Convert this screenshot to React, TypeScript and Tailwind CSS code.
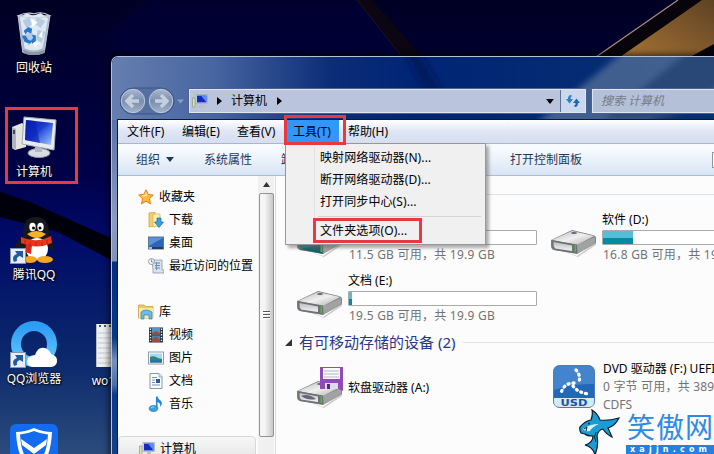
import type { ReactNode } from "react";
import clsx from "clsx";

function Wallpaper() {
  return (
    <svg className="absolute inset-0 h-[454px] w-[714px]" viewBox="0 0 714 454">
      <defs>
        <linearGradient id="sky" x1="0" y1="0" x2="0" y2="1">
          <stop offset="0" stopColor="#000024" />
          <stop offset="0.38" stopColor="#000048" />
          <stop offset="0.52" stopColor="#000a68" />
          <stop offset="0.8" stopColor="#0c2a6c" />
          <stop offset="1" stopColor="#2b4c7c" />
        </linearGradient>
        <linearGradient id="gold" x1="1" y1="0" x2="0" y2="1">
          <stop offset="0" stopColor="#5d4224" />
          <stop offset="1" stopColor="#a87434" />
        </linearGradient>
        <filter id="soft"><feGaussianBlur stdDeviation="3" /></filter>
      </defs>
      <rect width="714" height="454" fill="url(#sky)" />
      <path d="M150 0H370L420 56H112V30Z" fill="#00003c" opacity="0.5" filter="url(#soft)" />
      <path d="M0 192L30 202L111 238V260L58 232L0 217Z" fill="#00000c" />
      <path d="M356 0H372L422 57H402Z" fill="#0b0612" />
      <path d="M357 0L402 57" stroke="#1e1226" strokeWidth="1" />
      <path d="M678 0H714V57H596Z" fill="#07040c" />
      <path d="M702 0H714V44L690 57H620Z" fill="url(#gold)" />
      <path d="M678 0L596 57" stroke="#ad8d80" strokeWidth="1.2" />
    </svg>
  );
}

function RecycleBin() {
  return (
    <svg width="38" height="45" viewBox="0 0 40 48">
      <path d="M3 5L8 44Q20 49 31 44L37 5Z" fill="#a5b6ca" stroke="#c9d3df" />
      <path d="M5 7L10 40Q20 44 29 40L35 8L27 2L19 5L12 2Z" fill="#dfe9f3" />
      <path d="M8 10L15 7L18 14L12 19ZM23 6L32 11L27 18L20 13ZM10 26L17 21L21 29L14 37ZM24 20L32 22L28 34L22 30Z" fill="#b5cbe2" />
      <path d="M17 8L24 12L18 17ZM25 27L29 20L29 29ZM18 33L26 34L21 39Z" fill="#fff" />
      <path d="M9 21L14 17L18 19L17 24L13 22L11 25ZM7 26L11 26L14 31L18 32L16 35L10 33ZM18 25L22 26L22 32L18 35L17 31L19 29Z" fill="#2777cd" />
      <path d="M3 5Q12 1 20 3Q29 0 37 5Q20 10 3 5Z" fill="none" stroke="#c6cfdb" strokeWidth="1.2" />
      <path d="M8 41Q20 47 32 41L31 45Q20 49 9 45Z" fill="#8b979d" />
    </svg>
  );
}

function DesktopComputer() {
  return (
    <svg width="46" height="42" viewBox="0 0 46 42">
      <defs>
        <linearGradient id="screen" x1="0" y1="0" x2="1" y2="1">
          <stop offset="0" stopColor="#061a9c" />
          <stop offset="0.48" stopColor="#1c3fd6" />
          <stop offset="0.52" stopColor="#2d55d8" />
          <stop offset="1" stopColor="#a8cbff" />
        </linearGradient>
      </defs>
      <path d="M1 11L11 7L15 10V31L4 34L1 32Z" fill="#e3e4e2" />
      <path d="M1 11L5 13V33L1 32Z" fill="#aeb3b5" />
      <rect x="2" y="14" width="2" height="4" fill="#3d4a50" />
      <ellipse cx="28" cy="37" rx="11" ry="4.5" fill="#d9dde1" stroke="#9099a4" />
      <path d="M24 29L31 30V36H24Z" fill="#b0b9c4" />
      <path d="M13 1L45 4L43 34L11 28Z" fill="#e8ebee" stroke="#a4abb5" />
      <path d="M15 4L42 7L40 29L14 24Z" fill="url(#screen)" />
      <path d="M24 5L15 4L14 24L29 27Z" fill="#0a1fb0" opacity="0.6" />
    </svg>
  );
}

function ShortcutArrow() {
  return (
    <svg className="absolute bottom-0 left-0" width="16" height="16" viewBox="0 0 16 16">
      <rect x="0.5" y="0.5" width="15" height="15" fill="#e8eef6" stroke="#8295ad" />
      <path d="M4 14Q1 8 7 6L5 3L13 3L13 10L10 8Q6 9 7 13Z" fill="#235a9f" />
    </svg>
  );
}

function Penguin() {
  return (
    <svg width="42" height="48" viewBox="0 0 42 48">
      <path d="M10 20Q9 1 23 1Q37 1 36 20Q43 29 40 35L35 32Q33 43 23 43Q12 43 9 32L3 35Q0 27 10 20Z" fill="#16181c" />
      <ellipse cx="24" cy="33" rx="11" ry="11" fill="#fff" />
      <ellipse cx="17" cy="43.500" rx="7" ry="3.500" fill="#f5a623" />
      <ellipse cx="32" cy="43.500" rx="8" ry="3.500" fill="#f5a623" />
      <ellipse cx="19.500" cy="11" rx="3.200" ry="4.200" fill="#fff" />
      <ellipse cx="27.500" cy="11" rx="3.200" ry="4.200" fill="#fff" />
      <circle cx="20.500" cy="12" r="1.500" />
      <circle cx="27" cy="12" r="1.500" />
      <path d="M14 18Q23 12 33 18Q24 26 14 18Z" fill="#f7b124" />
      <path d="M8 21Q23 28 38 20L39 27Q24 34 8 27Z" fill="#e8371c" />
      <path d="M13 28L19 29L18 38L12 36Z" fill="#d82818" />
      <path d="M12 24V28M17 26V30M23 26V30M29 26V30M34 24V28" stroke="#b92213" />
    </svg>
  );
}

function QQBrowser() {
  return (
    <svg width="48" height="48" viewBox="0 0 48 48">
      <defs>
        <linearGradient id="ring" x1="0" y1="0" x2="0" y2="1">
          <stop offset="0" stopColor="#2d9cf4" />
          <stop offset="1" stopColor="#64c9ff" />
        </linearGradient>
      </defs>
      <circle cx="24" cy="24" r="18" fill="none" stroke="url(#ring)" strokeWidth="10" />
      <path d="M22 47Q15 45 18 38Q21 35 25 35Q28 26 35 28Q40 30 41 34Q48 36 47 42Q46 47 40 47Z" fill="#fff" />
    </svg>
  );
}

function Notepad() {
  return (
    <svg width="40" height="44" viewBox="0 0 40 44">
      <rect width="40" height="43" fill="#eef0f1" />
      <path d="M0 0V43" stroke="#b9bdc3" strokeWidth="2" />
      <path d="M2 9H40M2 14H40M2 19H40M2 24H40M2 29H40M2 34H40M2 39H40" stroke="#c3cad2" />
      <path d="M3 2H5M8 2H10M13 2H15" stroke="#555" strokeWidth="2" />
    </svg>
  );
}

function Shield() {
  return (
    <svg width="48" height="48" viewBox="0 0 48 48">
      <rect width="48" height="48" rx="6" fill="#136cf0" />
      <path d="M24 4Q33 8 42 8Q41 28 35 36Q30 42 24 45Q18 42 13 36Q7 28 6 8Q15 8 24 4Z" fill="#fff" />
      <path d="M24 7Q31 10 38 10.500Q37 26 33 32Q29 38 24 41Q19 38 15 32Q11 26 10 10.500Q17 10 24 7Z" fill="#136cf0" />
      <path d="M11 15L24 24L37 15L36 21L24 30L12 21Z" fill="#fff" />
    </svg>
  );
}

function DesktopIcon({ place, label, shortcut, children }: {
  place: string;
  label: string;
  shortcut?: boolean;
  children: ReactNode;
}) {
  return (
    <div className={clsx("absolute flex w-[68px] flex-col items-center", place)}>
      <div className="relative flex h-12 w-12 items-center justify-center">
        {children}
        {shortcut && <ShortcutArrow />}
      </div>
      <span className="pt-0.5 text-xs leading-[18px] whitespace-nowrap text-white [text-shadow:1px_1px_2px_#000,0_0_2px_#000]">
        {label}
      </span>
    </div>
  );
}

function ComputerIcon() {
  return (
    <svg className="shrink-0" width="16" height="16" viewBox="0 0 16 16">
      <path d="M0.500 5H3V14H0.500Z" fill="#dce6b4" stroke="#8a967a" strokeWidth="0.7" />
      <rect x="4" y="1.500" width="11.500" height="9" fill="#dfe6f2" stroke="#99a5b8" strokeWidth="0.7" />
      <rect x="5" y="2.500" width="9.500" height="7" fill="#142bc0" />
      <path d="M9 2.500H14.500V9.500Z" fill="#5f8cf5" />
      <path d="M8 11H12V13H14V15H6V13H8Z" fill="#b8c0ca" />
    </svg>
  );
}

function StarIcon() {
  return (
    <svg width="16" height="16" viewBox="0 0 16 16">
      <path d="M8 0.800L10.200 5.400L15.300 6.100L11.500 9.600L12.500 14.800L8 12.200L3.500 14.800L4.500 9.600L0.700 6.100L5.800 5.400Z" fill="#ffb93e" stroke="#e97b16" />
      <path d="M8 3L9.300 6.500L5 8L4 6.500L6.500 6Z" fill="#fff0a8" />
    </svg>
  );
}

function DownloadFolderIcon() {
  return (
    <svg width="16" height="16" viewBox="0 0 16 16">
      <path d="M1 1L7 0V14L1 15Z" fill="#f3cf6c" stroke="#c59a35" strokeWidth="0.7" />
      <path d="M5 2H12V14L5 15Z" fill="#fff0a9" stroke="#ceb058" strokeWidth="0.7" />
      <path d="M9 6H13V10H15.500L11 15.500L6.500 10H9Z" fill="#3a9ee9" stroke="#1867ad" strokeWidth="0.7" />
    </svg>
  );
}

function DesktopFolderIcon() {
  return (
    <svg width="16" height="16" viewBox="0 0 16 16">
      <rect x="0.500" y="2" width="15" height="12" fill="#2c66b4" stroke="#64748b" />
      <path d="M1 11Q9 6 15 3V2.500H1Z" fill="#5794dc" />
      <path d="M1 12H15V14H1Z" fill="#203d70" />
      <path d="M1 12H4V14H1Z" fill="#8bc7ee" />
    </svg>
  );
}

function RecentIcon() {
  return (
    <svg width="16" height="16" viewBox="0 0 16 16">
      <path d="M4 2H14V12H16V15H5V12Z" fill="#dbe2eb" stroke="#8b9aaa" strokeWidth="0.8" />
      <path d="M7 5H12M7 7.500H12M7 10H12" stroke="#6485ad" />
      <path d="M8 4H9V12H8Z" fill="#7091bd" />
      <circle cx="3.500" cy="3.500" r="3" fill="#f7f8fa" stroke="#90999f" />
      <path d="M3.500 1.500V4H5.500" stroke="#556575" strokeWidth="0.7" fill="none" />
    </svg>
  );
}

function LibraryIcon() {
  return (
    <svg width="16" height="16" viewBox="0 0 16 16">
      <path d="M0.500 1H6L7.500 2.500H15V14H0.500Z" fill="#edca68" stroke="#c49b3c" strokeWidth="0.7" />
      <path d="M1 4H15V14H1Z" fill="#ffe9a0" />
      <path d="M3 8Q8 4 14 8V15H11V11H6V15H3Z" fill="#68bde9" stroke="#2881b6" strokeWidth="0.7" />
    </svg>
  );
}

function VideoIcon() {
  return (
    <svg width="16" height="16" viewBox="0 0 16 16">
      <rect x="1" y="0.500" width="14" height="15" fill="#23323e" />
      <rect x="4" y="1" width="8" height="6.500" fill="#5795c4" />
      <rect x="4" y="8.500" width="8" height="6.500" fill="#4686ba" />
      <path d="M4 6L8 4L12 6V7.500H4ZM4 12L8 9.500L12 13V15H4Z" fill="#994d3a" />
      <path d="M2.500 1.500V15M13.500 1.500V15" stroke="#edf2f4" strokeWidth="1.4" strokeDasharray="1.4 1.4" />
    </svg>
  );
}

function PictureIcon() {
  return (
    <svg width="16" height="16" viewBox="0 0 16 16">
      <rect x="0.500" y="2" width="15" height="12" fill="#fff" stroke="#909ca6" />
      <rect x="2" y="3.500" width="12" height="9" fill="#a7d8f6" />
      <path d="M2 7Q6 5 10 8L14 9V12.500H2Z" fill="#35847a" />
      <path d="M2 10H14V12.500H2Z" fill="#2375a5" />
    </svg>
  );
}

function DocumentIcon() {
  return (
    <svg width="16" height="16" viewBox="0 0 16 16">
      <path d="M2 0.500H11L14 3.500V15.500H2Z" fill="#f8fbff" stroke="#8798ab" />
      <path d="M11 0.500V4H14" fill="#dbe5f1" stroke="#8798ab" strokeWidth="0.7" />
      <path d="M4 4.500H9M4 7H7M4 9.500H7M4 12H12" stroke="#7990ae" />
      <rect x="8" y="6" width="4" height="4" fill="#31588e" />
    </svg>
  );
}

function MusicIcon() {
  return (
    <svg width="16" height="16" viewBox="0 0 16 16">
      <path d="M8 0.500H9.500Q10 3 13 5Q15 8 12 11Q13 7 9.500 6V12.500H8Z" fill="#2485d2" />
      <ellipse cx="5.500" cy="12.500" rx="4.300" ry="2.900" fill="#39a2e5" stroke="#1c6faf" strokeWidth="0.7" />
      <path d="M3 12Q4 10.500 6 11" stroke="#a6dcff" fill="none" />
    </svg>
  );
}

const navRows: { icon: ReactNode; label: string; level: number }[] = [
  { icon: <StarIcon />, label: "收藏夹", level: 0 },
  { icon: <DownloadFolderIcon />, label: "下载", level: 1 },
  { icon: <DesktopFolderIcon />, label: "桌面", level: 1 },
  { icon: <RecentIcon />, label: "最近访问的位置", level: 1 },
];

const libraryRows: { icon: ReactNode; label: string; level: number }[] = [
  { icon: <LibraryIcon />, label: "库", level: 0 },
  { icon: <VideoIcon />, label: "视频", level: 1 },
  { icon: <PictureIcon />, label: "图片", level: 1 },
  { icon: <DocumentIcon />, label: "文档", level: 1 },
  { icon: <MusicIcon />, label: "音乐", level: 1 },
];

function NavRow({ icon, label, level }: { icon: ReactNode; label: string; level: number }) {
  return (
    <div className={clsx("flex h-[23px] shrink-0 items-center gap-[5px] whitespace-nowrap", level === 0 ? "pl-5" : "pl-[30px]")}>
      {icon}
      <span>{label}</span>
    </div>
  );
}

function DriveIcon({ kind }: { kind?: "system" | "floppy" }) {
  return (
    <svg className="shrink-0" width="48" height="48" viewBox="0 0 48 48">
      <defs>
        <linearGradient id="metal" x1="0" y1="0" x2="1" y2="1">
          <stop offset="0" stopColor="#b8b8b8" />
          <stop offset="0.5" stopColor="#f0f0f0" />
          <stop offset="1" stopColor="#aaabac" />
        </linearGradient>
        <linearGradient id="face" x1="0" y1="0" x2="0" y2="1">
          <stop offset="0" stopColor="#bcbcc2" />
          <stop offset="1" stopColor="#f3f3f8" />
        </linearGradient>
      </defs>
      <path d="M4 34L27 42L46 28V31L28 43Z" fill="#777" opacity="0.35" />
      <path d="M1 26L22 16L43 21Q47 22 46 26V29L27 40L4 36Q1 35 1 32Z" fill="#858787" />
      <path d="M2 26L22 17L44 22L27 31Z" fill="url(#metal)" />
      <path d="M1.500 26L27 30.500V39.500L4 36Q1.500 34 1.500 31Z" fill="#6f7273" />
      <path d="M3.500 28L22 31.500V37L5 34.500Q3 32 3.500 28Z" fill={kind === "system" ? "#197b7a" : "url(#face)"} />
      {kind === "system" && <path d="M4 35L24 31L27 40Z" fill="#156467" />}
      <path d="M27 31L45 23V29L28 39Z" fill="#a1a3a3" />
      <rect x="24.500" y="31" width="1.5" height="7" fill="#46c039" />
      <ellipse cx="24" cy="19" rx="3" ry="1" fill="#667" />
      {kind === "floppy" && (
        <>
          <path d="M5 31Q12 28 20 34Q12 36 5 31Z" fill="#667" />
          <path d="M24 2H47V26L43 24H24Z" fill="#914bb5" />
          <path d="M27 3H44V14H27Z" fill="#fafafa" />
          <path d="M28 6H43M28 9H43M28 12H43" stroke="#b5b7c2" />
          <path d="M29 18H42V24H29Z" fill="#e1d8e8" />
          <path d="M31 19H34V24H31Z" fill="#502c73" />
        </>
      )}
    </svg>
  );
}

function UsbDisc() {
  return (
    <svg width="42" height="43" viewBox="0 0 42 43">
      <rect x="0.500" y="0.500" width="41" height="42" rx="6" fill="#2367b9" stroke="#477bbb" />
      <path d="M1 6Q1 1 7 1H35Q41 1 41 6V19Q20 18 1 25Z" fill="#4384cc" />
      <path d="M1 33H41V37Q41 42 35 42H7Q1 42 1 37Z" fill="#d9e8f6" />
      <path d="M23 5Q29 12 25 18M21 18Q11 18 8 28M20 21Q25 28 36 29" stroke="#fff" strokeWidth="3.300" strokeLinecap="round" strokeDasharray="1 4" fill="none" />
      <text x="21" y="40.500" textAnchor="middle" textLength="27" lengthAdjust="spacingAndGlyphs" fontSize="8" fontWeight="700" fill="#1d519b" fontFamily="DejaVu Sans, sans-serif">USD</text>
    </svg>
  );
}

function CapacityBar({ fill }: { fill: number }) {
  return (
    <div className="h-[15px] w-[189px] rounded-[1px] border border-[#aaa] bg-white">
      <div className="h-full bg-linear-to-b from-[#55c0d5] from-50% to-[#008ca4] to-50%" style={{ width: `${fill}px` }} />
    </div>
  );
}

function Drive({ name, free, fill, system }: { name?: string; free: string; fill: number; system?: boolean }) {
  return (
    <div className="flex h-[61px] w-[254px] gap-1">
      <div className="pt-[3px]"><DriveIcon kind={system ? "system" : undefined} /></div>
      <div className="flex flex-col whitespace-nowrap">
        <span className="h-[19px] leading-[18px]">{name}</span>
        <CapacityBar fill={fill} />
        <span className="pt-px pl-px leading-[17px] tracking-[0.24px] text-[#737373]">{free}</span>
      </div>
    </div>
  );
}

function Shark() {
  return (
    <svg width="42" height="46" viewBox="0 0 42 46">
      <path d="M13 1Q19 5 21 11Q29 12 40 9Q36 17 29 19L33 28Q27 25 24 20Q19 21 18 27Q20 36 16 46Q14 38 6 36Q14 34 14 27Q8 27 6 25L2 24Q0 20 1 18Q6 12 12 11Q14 6 13 1Z" fill="#1a9dd4" stroke="#101b29" strokeWidth="1.200" />
      <path d="M4 20Q11 15 20 15Q13 18 11 22Q6 23 4 20Z" fill="#d9f4fb" />
      <path d="M5 20L8 18L7 22M17 23Q14 28 17 33" stroke="#101b29" fill="none" />
      <circle cx="10" cy="14.500" r="0.9" fill="#101b29" />
    </svg>
  );
}

function TitleGlass() {
  return (
    <svg className="absolute inset-0" width="603" height="398" viewBox="0 0 603 398">
      <defs>
        <linearGradient id="glass" x1="0" y1="0" x2="1" y2="0">
          <stop offset="0" stopColor="#667eb0" />
          <stop offset="0.17" stopColor="#4765a0" />
          <stop offset="0.36" stopColor="#0c2d78" />
          <stop offset="0.5" stopColor="#002575" />
          <stop offset="1" stopColor="#073071" />
        </linearGradient>
        <linearGradient id="edge" x1="0" y1="0" x2="0" y2="1">
          <stop offset="0" stopColor="#5871a8" />
          <stop offset="0.3" stopColor="#8c9bc2" />
          <stop offset="0.42" stopColor="#8090b8" />
          <stop offset="0.425" stopColor="#062d7d" />
          <stop offset="0.65" stopColor="#083989" />
          <stop offset="0.72" stopColor="#7890bf" />
          <stop offset="0.79" stopColor="#496fa9" />
          <stop offset="0.82" stopColor="#0a3990" />
          <stop offset="1" stopColor="#153f86" />
        </linearGradient>
      </defs>
      <rect width="603" height="63" fill="url(#glass)" />
      <g filter="url(#soft)">
        <path d="M292 -5H308L334 40H315Z" fill="#001851" opacity="0.6" />
        <path d="M515 -8H620V30L530 70H420Z" fill="#54709a" opacity="0.75" />
        <path d="M575 -5H620V20L560 63H490Z" fill="#1d3a68" opacity="0.6" />
      </g>
      <rect y="63" width="7" height="335" fill="url(#edge)" />
    </svg>
  );
}

function Header() {
  return (
    <div className="relative flex h-[62px] shrink-0 items-start pt-[32px] pl-[3px]">
      <div className="flex w-[69px] shrink-0 items-center">
        <svg className="-mt-0.5" width="67" height="28" viewBox="0 0 67 28">
          <defs>
            <linearGradient id="orb" x1="0" y1="0" x2="0" y2="1">
              <stop offset="0" stopColor="#a9b6cd" />
              <stop offset="0.5" stopColor="#7b8eb0" />
              <stop offset="1" stopColor="#a3b2ca" />
            </linearGradient>
          </defs>
          <rect x="0" y="1" width="54" height="26" rx="13" fill="#53709f" stroke="#3a558a" />
          <circle cx="13" cy="14" r="11.700" fill="url(#orb)" stroke="#bfcadb" />
          <circle cx="41" cy="14" r="11.700" fill="url(#orb)" stroke="#bfcadb" />
          <path d="M19 14H8M13 8L7 14L13 20M35 14H46M41 8L47 14L41 20" fill="none" stroke="#c5cfde" strokeWidth="3.500" />
          <path d="M57 12.500H64L60.500 16.500Z" fill="#8b9dbd" />
        </svg>
      </div>
      <div className="flex h-[24px] w-[397px] shrink-0 items-center border border-[#dfe6f2] bg-[#bac4dd] pl-[2px] outline outline-[#4a6290]">
        <ComputerIcon />
        <svg className="ml-[9px]" width="5" height="8" viewBox="0 0 5 8"><path d="M0 0L5 4L0 8Z" /></svg>
        <span className="ml-[9px]">计算机</span>
        <svg className="ml-2.5" width="5" height="8" viewBox="0 0 5 8"><path d="M0 0L5 4L0 8Z" /></svg>
        <div className="ml-auto flex h-full items-center">
          <svg className="mr-1.5" width="8" height="5" viewBox="0 0 8 5"><path d="M0 0H8L4 5Z" /></svg>
          <div className="flex h-full w-[25px] items-center justify-center border-l border-[#5d7193] bg-[#cbd7ec]">
            <svg width="16" height="14" viewBox="0 0 16 14">
              <path d="M6 1Q3 1 3 5H1L4.500 9.500L8 5H5.500Q5 3 7 2Z" fill="#2982c6" />
              <path d="M10 13Q13 13 13 9H15L11.500 4.500L8 9H10.500Q11 11 9 12Z" fill="#2466ad" />
            </svg>
          </div>
        </div>
      </div>
      <div className="ml-1.5 flex h-[24px] flex-1 items-center border border-r-0 border-[#dfe6f2] bg-[#b4c0d8] pl-2 text-[#747b87] italic outline outline-[#4a6290]">
        搜索 计算机
      </div>
    </div>
  );
}

function MenuBar() {
  return (
    <div className="flex h-6 shrink-0 items-stretch border-b border-[#aab6cb] bg-linear-to-b from-white via-[#dfe5f4] to-[#d6deef] text-black">
      {["文件(F)", "编辑(E)", "查看(V)"].map((item) => (
        <span key={item} className="flex w-[55px] items-center pl-[9px]">{item}</span>
      ))}
      <span className="ml-[3px] flex w-[53px] items-center bg-[#3297fa] pl-[7px]">工具(T)</span>
      <span className="flex items-center pl-[9px]">帮助(H)</span>
    </div>
  );
}

function ToolsMenu() {
  const item = "flex h-[22px] items-center pl-[34px] tracking-[0.1px]";
  return (
    <div className="absolute left-[285px] top-[143px] h-[102px] w-[201px] border border-[#979797] bg-[#f0f0f0] pt-[3px] text-black shadow-[3px_3px_3px_#6668]">
      <div className="ml-[28px] h-full border-l border-[#e1e1e1]">
        <div className="-ml-[29px]">
          <div className={item}>映射网络驱动器(N)...</div>
          <div className={item}>断开网络驱动器(D)...</div>
          <div className={item}>打开同步中心(S)...</div>
          <div className="mt-[3px] mr-1 ml-8 h-[4px] border-t border-[#d4d4d4]" />
          <div className={item}>文件夹选项(O)...</div>
        </div>
      </div>
    </div>
  );
}

function Sidebar() {
  return (
    <div className="flex w-[158px] shrink-0 overflow-hidden border-r border-[#d3dceb]">
      <div className="flex w-[140px] shrink-0 flex-col pt-[9px] pr-[2px]">
        {navRows.map((row) => <NavRow key={row.label} {...row} />)}
        <div className="h-[23px] shrink-0" />
        {libraryRows.map((row) => <NavRow key={row.label} {...row} />)}
        <div className="mt-[21px] shrink-0 rounded-t-sm border border-[#d8d8d8] bg-linear-to-b from-[#f7f7f7] to-[#e5e5e5]">
          <NavRow icon={<ComputerIcon />} label="计算机" level={0} />
        </div>
      </div>
      <div className="flex w-4 flex-col items-center bg-[#f0f0f0]">
        <svg className="mt-1.5 mb-[5px] shrink-0" width="7" height="6" viewBox="0 0 7 6"><path d="M0 5L3.500 0L7 5Z" fill="#333" /></svg>
        <div className="flex h-[244px] w-[15px] shrink-0 flex-col items-center justify-center gap-px rounded-xs border border-[#929292] bg-linear-to-r from-[#f5f5f5] from-35% to-[#c7c8ca]">
          <div className="h-0.5 w-[7px] border-t border-[#555] bg-white" />
          <div className="h-0.5 w-[7px] border-t border-[#555] bg-white" />
          <div className="h-0.5 w-[7px] border-t border-[#555] bg-white" />
        </div>
      </div>
    </div>
  );
}

function Contents() {
  return (
    <div className="flex min-w-0 flex-1 flex-col overflow-hidden pl-[9px]">
      <div className="mt-[18px] h-[17px] shrink-0 border-t border-[#dce1e8]" />
      <div className="flex w-[520px] shrink-0 flex-wrap pl-[11px]">
        <Drive free="11.5 GB 可用，共 19.9 GB" fill={80} system />
        <Drive name="软件 (D:)" free="16.8 GB 可用，共 19.9 GB" fill={30} />
        <Drive name="文档 (E:)" free="19.5 GB 可用，共 19.9 GB" fill={3} />
      </div>
      <div className="-mt-px flex h-5 shrink-0 items-center text-[15px] whitespace-nowrap text-[#263886]">
        <svg className="mr-[7px]" width="7" height="7" viewBox="0 0 7 7"><path d="M7 0V7H0Z" fill="#333" /></svg>
        <span>有可移动存储的设备 (2)</span>
        <div className="ml-2 h-px flex-1 bg-[#dce1e8]" />
      </div>
      <div className="mt-2.5 flex w-[530px] shrink-0 items-start pl-[11px]">
        <div className="flex w-[257px] items-center gap-1 pt-[3px]">
          <DriveIcon kind="floppy" />
          <span className="pb-0.5">软盘驱动器 (A:)</span>
        </div>
        <div className="flex gap-2">
          <div className="pt-[3px]"><UsbDisc /></div>
          <div className="-mt-0.5 flex flex-col leading-[18px] whitespace-nowrap">
            <span>DVD 驱动器 (F:) UEFI</span>
            <span className="tracking-[0.2px] text-[#737373]">0 字节 可用，共 389 MB</span>
            <span className="text-[#737373]">CDFS</span>
          </div>
        </div>
      </div>
    </div>
  );
}

function ExplorerWindow() {
  return (
    <div className="absolute left-[111px] top-[56px] h-[400px] w-[605px] overflow-hidden rounded-tl-[7px] border-l border-t border-[#b4c1d8] shadow-[0_0_6px_2px_#0009]">
      <TitleGlass />
      <div className="relative flex h-full flex-col pl-[5px]">
        <Header />
        <div className="flex flex-1 flex-col overflow-hidden border-l border-t border-[#061a48] bg-[#fcfcfc]">
          <MenuBar />
          <div className="flex h-8 shrink-0 items-center border-b border-[#a9bdd7] bg-linear-to-b from-[#f8fbfe] from-15% to-[#d8e5f4] pl-[18px] whitespace-nowrap text-[#1e395b]">
            <span>组织</span>
            <svg className="ml-1.5" width="8" height="5" viewBox="0 0 8 5"><path d="M0 0H8L4 5Z" fill="#1e395b" /></svg>
            <span className="ml-[30px]">系统属性</span>
            <span className="ml-[29px]">卸</span>
            <span className="ml-[217px]">打开控制面板</span>
            <div className="ml-auto mr-px h-4 w-[3px] border border-r-0 border-[#8b98aa] bg-white" />
          </div>
          <div className="flex min-h-0 flex-1">
            <Sidebar />
            <Contents />
          </div>
        </div>
      </div>
    </div>
  );
}

function Marker({ place }: { place: string }) {
  return <div className={clsx("absolute border-[3px] border-[#e8393e]", place)} />;
}

export default function App() {
  return (
    <div className="relative h-[454px] w-[714px] overflow-hidden bg-[#000035] font-['Noto_Sans','Noto_Sans_CJK_SC',sans-serif] text-xs text-black">
      <Wallpaper />
      <DesktopIcon place="left-0 top-[9px]" label="回收站"><RecycleBin /></DesktopIcon>
      <DesktopIcon place="left-0 top-[113px]" label="计算机"><DesktopComputer /></DesktopIcon>
      <DesktopIcon place="left-0 top-[216px]" label="腾讯QQ" shortcut><Penguin /></DesktopIcon>
      <DesktopIcon place="left-0 top-[320px]" label="QQ浏览器" shortcut><QQBrowser /></DesktopIcon>
      <div className="absolute left-[10px] top-[424px]"><Shield /></div>
      <DesktopIcon place="left-[82px] top-[322px]" label="wo12.txt"><Notepad /></DesktopIcon>
      <ExplorerWindow />
      <ToolsMenu />
      <Marker place="left-[5px] top-[107px] h-[77px] w-[73px]" />
      <Marker place="left-[284px] top-[115px] h-[30px] w-[62px]" />
      <Marker place="left-[313px] top-[218px] h-[25px] w-[109px]" />
      <div className="absolute left-[579px] top-[409px] flex">
        <Shark />
        <div className="flex flex-col pt-[3px] pl-[5px] whitespace-nowrap text-[#2f8ae6]">
          <span className="h-[33px] pl-px text-[28px] leading-[30px] tracking-[1px]">笑傲网</span>
          <span className="w-[90px] bg-[#2580df] pl-1 font-['DejaVu_Sans',sans-serif] text-[8px] leading-[10px] font-bold tracking-[4.2px] text-white">xajjn.com</span>
        </div>
      </div>
    </div>
  );
}
